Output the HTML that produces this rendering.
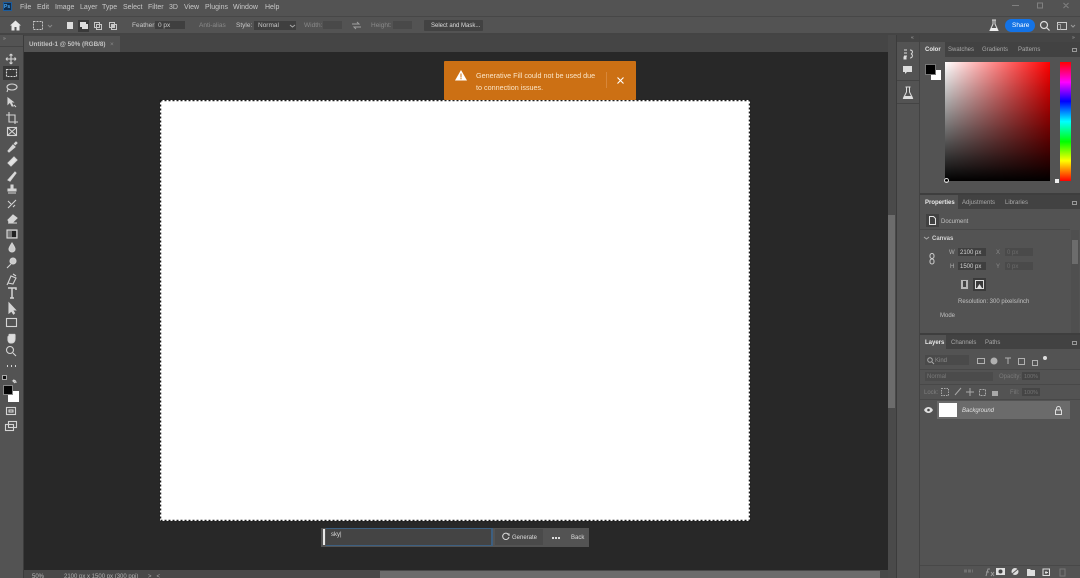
<!DOCTYPE html>
<html><head><meta charset="utf-8"><style>
*{box-sizing:border-box}
html,body{margin:0;padding:0;width:1080px;height:578px;overflow:hidden;background:#535353}
body{font-family:"Liberation Sans",sans-serif;color:#d0d0d0}
#w{position:relative;width:1080px;height:578px;overflow:hidden;background:#535353;filter:blur(.3px)}
.a{position:absolute}
.t{position:absolute;white-space:nowrap;line-height:10px;font-size:6.5px;color:#c8c8c8;margin-top:2px}
.d{color:#8a8a8a}
.f{position:absolute;background:#3f3f3f}
svg{position:absolute;overflow:visible}
</style></head><body><div id="w">
<!-- menu -->
<div class="a" style="left:0;top:0;width:1080px;height:16px;background:#535353"></div>
<div class="a" style="left:3px;top:2px;width:9px;height:9px;background:#0f2c4d;border:1px solid #1c5c9c"></div>
<div class="t" style="left:4px;top:0px;font-size:5px;color:#4aa8f0;font-weight:bold">Ps</div>
<div class="t" style="left:20px;top:1px;font-size:7px">File</div>
<div class="t" style="left:37px;top:1px;font-size:7px">Edit</div>
<div class="t" style="left:55px;top:1px;font-size:7px">Image</div>
<div class="t" style="left:80px;top:1px;font-size:7px">Layer</div>
<div class="t" style="left:102px;top:1px;font-size:7px">Type</div>
<div class="t" style="left:123px;top:1px;font-size:7px">Select</div>
<div class="t" style="left:148px;top:1px;font-size:7px">Filter</div>
<div class="t" style="left:169px;top:1px;font-size:7px">3D</div>
<div class="t" style="left:184px;top:1px;font-size:7px">View</div>
<div class="t" style="left:205px;top:1px;font-size:7px">Plugins</div>
<div class="t" style="left:233px;top:1px;font-size:7px">Window</div>
<div class="t" style="left:265px;top:1px;font-size:7px">Help</div>
<svg style="left:1010px;top:0" width="70" height="12" fill="none" stroke="#808080"><path d="M2 5.500h7M27.500 3h5v5h-5zM53.500 3l5 5M58.500 3l-5 5"/></svg>
<!-- options -->
<div class="a" style="left:0;top:16px;width:1080px;height:1px;background:#474747"></div>
<div class="a" style="left:0;top:33px;width:1080px;height:2px;background:#444"></div>
<svg style="left:10px;top:20px" width="11" height="11"><path d="M5.500 0.500L11 5.500H9.500V10.500H6.500V7H4.500V10.500H1.500V5.500H0Z" fill="#e6e6e6"/></svg>
<svg style="left:33px;top:21px" width="22" height="10" fill="none" stroke="#c4c4c4"><rect x=".5" y=".5" width="9" height="8" stroke-dasharray="2 1"/><path d="M15 4l2 2 2-2" stroke="#888"/></svg>
<div class="a" style="left:67px;top:22px;width:6px;height:7px;background:#ddd"></div>
<div class="a" style="left:78px;top:20px;width:11px;height:12px;background:#3a3a3a"></div>
<div class="a" style="left:80px;top:22px;width:6px;height:5px;background:#ddd"></div>
<div class="a" style="left:82px;top:24px;width:6px;height:5px;background:#ddd"></div>
<svg style="left:94px;top:22px" width="24" height="9" fill="none" stroke="#c8c8c8"><rect x=".5" y=".5" width="5" height="5"/><rect x="2.500" y="2.500" width="5" height="5"/><rect x="15.500" y=".5" width="5" height="5"/><rect x="17.500" y="2.500" width="5" height="5"/><rect x="18" y="3" width="2" height="2" fill="#c8c8c8"/></svg>
<div class="t" style="left:132px;top:19px" >Feather:</div>
<div class="f" style="left:155px;top:21px;width:30px;height:8px"></div>
<div class="t" style="left:158px;top:19px">0 px</div>
<div class="t d" style="left:199px;top:19px">Anti-alias</div>
<div class="t" style="left:236px;top:19px">Style:</div>
<div class="f" style="left:254px;top:21px;width:42px;height:9px"></div>
<div class="t" style="left:258px;top:19px">Normal</div>
<svg style="left:290px;top:24px" width="5" height="4" fill="none" stroke="#aaa"><path d="M0 1l2.500 2 2.500-2"/></svg>
<div class="t d" style="left:304px;top:19px">Width:</div>
<div class="a" style="left:323px;top:21px;width:19px;height:8px;background:#494949"></div>
<svg style="left:352px;top:21px" width="9" height="9" fill="none" stroke="#a0a0a0"><path d="M0 3h7l-2-2M9 6H2l2 2"/></svg>
<div class="t d" style="left:371px;top:19px">Height:</div>
<div class="a" style="left:393px;top:21px;width:19px;height:8px;background:#494949"></div>
<div class="a" style="left:424px;top:20px;width:59px;height:11px;background:#424242;border-radius:1px"></div>
<div class="t" style="left:431px;top:19px;color:#ddd;font-size:6px">Select and Mask...</div>
<svg style="left:989px;top:19px" width="10" height="13"><path d="M3 1h4M4 1v4L1 11.500h8L6 5V1" fill="none" stroke="#ddd"/><path d="M2 9h6l1 3H1z" fill="#eee"/></svg>
<div class="a" style="left:1005px;top:19px;width:30px;height:13px;background:#1473e6;border-radius:7px"></div>
<div class="t" style="left:1012px;top:19px;color:#fff">Share</div>
<svg style="left:1040px;top:21px" width="10" height="10" fill="none" stroke="#ddd" stroke-width="1.200"><circle cx="4" cy="4" r="3.500"/><path d="M6.500 6.500L9.500 9.500"/></svg>
<svg style="left:1057px;top:22px" width="18" height="9" fill="none" stroke="#ccc"><rect x=".5" y=".5" width="9" height="7"/><path d="M.5 2.500h3v5M14 3l2 2 2-2" stroke="#999"/></svg>
<!-- tab row -->
<div class="a" style="left:0;top:35px;width:896px;height:17px;background:#454545"></div>
<div class="a" style="left:24px;top:36px;width:96px;height:16px;background:#535353"></div>
<div class="t" style="left:29px;top:38px;color:#d6d6d6;font-size:6.300px;font-weight:bold;opacity:.85">Untitled-1 @ 50% (RGB/8)</div>
<div class="t d" style="left:110px;top:38px">×</div>
<!-- toolbar -->
<div class="a" style="left:0;top:35px;width:24px;height:543px;background:#535353;border-right:1px solid #3c3c3c"></div>
<div class="a" style="left:0;top:46px;width:23px;height:1px;background:#444"></div>
<div class="t" style="left:3px;top:32px;font-size:5px;color:#aaa">»</div>
<div class="a" style="left:3px;top:66px;width:16px;height:14px;background:#383838"></div>
<svg style="left:0;top:50px" width="24" height="390" fill="none" stroke="#d4d4d4" stroke-width="1.100">
<path d="M11 4v10M6 9h10M11 4l-1.500 1.500M11 4l1.500 1.500M11 14l-1.500-1.500M11 14l1.500-1.500M6 9l1.500-1.500M6 9l1.500 1.500M16 9l-1.500-1.500M16 9l-1.500 1.500"/>
<rect x="6.500" y="19.500" width="10" height="7" stroke-dasharray="2 1"/>
<ellipse cx="12" cy="37" rx="5" ry="3"/><path d="M8 39l-1 3"/>
<path d="M8 48l5 4-2 0 2 4-1 0-2-4-2 2z" fill="#d4d4d4"/><path d="M14 55l2 2"/>
<path d="M9 62v10h9M6 65h9v9"/>
<rect x="7.500" y="77.500" width="9" height="8"/><path d="M7.500 77.500l9 8M16.500 77.500l-9 8"/>
<path d="M8 101l5-6 2 2-6 5zM14 94l2-2 1 1-2 2" fill="#d4d4d4"/>
<path d="M8 113l6-6 3 3-6 6z" fill="#e4e4e4"/>
<path d="M8 130l7-8 1 1-6 8z" fill="#e4e4e4"/>
<path d="M11 135h2l0 4h3v2H8v-2h3zM8 143h8" fill="#d4d4d4"/>
<path d="M8 158l8-8M8 151l3 3M13 157l2-2" />
<path d="M8 170l5-5 4 3-4 4H9z" fill="#d4d4d4"/><path d="M8 173h9"/>
<rect x="7" y="180" width="10" height="8" fill="#777" stroke="#ddd"/><rect x="12" y="181" width="4" height="6" fill="#222" stroke="none"/>
<path d="M12 193c2 3 3 5 3 6a3 3 0 0 1-6 0c0-1 1-3 3-6z" fill="#ccc"/>
<circle cx="13" cy="211" r="3" fill="#ccc"/><path d="M11 214l-4 4"/>
<path d="M8 233l3-7 5 2-3 6zM13 224l3 2M7 235l1-2"/>
<path d="M8 238h8v2M12 238v10M10 248h4" stroke-width="1.500"/>
<path d="M9 253v10l2.500-2 2 3 1-1-2-3h3z" fill="#d4d4d4"/>
<rect x="6.500" y="268.500" width="10" height="8"/>
<path d="M8 290v-3c0-1 1-1 1 0v-2c0-1 2-1 2 0 0-1 2-1 2 0 0-1 2-1 2 0v4c0 3-2 4-3 4h-2c-1 0-2-2-2-3z" fill="#ddd"/>
<circle cx="10" cy="300" r="3.500"/><path d="M13 303l3 3"/>
<path d="M7 316h1M11 316h1M15 316h1" stroke-width="2"/>
<path d="M13 330c2 0 3 1 3 3M15 331l-2 0 2 2"/>
<rect x="6.500" y="357.500" width="9" height="7"/><rect x="9" y="360" width="4" height="2"/>
<rect x="8.500" y="371.500" width="8" height="6"/><rect x="5.500" y="374.500" width="8" height="6"/>
</svg>
<div class="a" style="left:2px;top:375px;width:5px;height:5px;background:#111;border:1px solid #aaa"></div>
<div class="a" style="left:8px;top:391px;width:11px;height:11px;background:#fff"></div>
<div class="a" style="left:3px;top:385px;width:10px;height:10px;background:#050505;border:1px solid #888"></div>
<!-- canvas area -->
<div class="a" style="left:24px;top:52px;width:864px;height:518px;background:#282828"></div>
<div class="a" style="left:160px;top:100px;width:590px;height:421px;background:#fff"></div>
<svg style="left:160px;top:100px" width="590" height="421" fill="none"><rect x="0.500" y="0.500" width="589" height="420" stroke="#1a1a1a" stroke-dasharray="2 2" stroke-width="1.500"/></svg>
<!-- toast -->
<div class="a" style="left:444px;top:61px;width:192px;height:39px;background:#cc7014;border-radius:1px"></div>
<svg style="left:455px;top:70px" width="12" height="11"><path d="M6 0L12 10.500H0Z" fill="#fff"/><path d="M5.500 3.500h1v4h-1zM5.500 8h1v1.200h-1z" fill="#cc7014"/></svg>
<div class="t" style="left:476px;top:69px;font-size:7.200px;color:#fbe6c8">Generative Fill could not be used due</div>
<div class="t" style="left:476px;top:81px;font-size:7.200px;color:#fbe6c8">to connection issues.</div>
<div class="a" style="left:606px;top:72px;width:1px;height:16px;background:#d8873a"></div>
<svg style="left:617px;top:77px" width="7" height="7" stroke="#fff" stroke-width="1.100"><path d="M.5.500l6 6M6.500.500l-6 6"/></svg>
<!-- prompt bar -->
<div class="a" style="left:321px;top:528px;width:268px;height:19px;background:#535353"></div>
<div class="a" style="left:323px;top:529px;width:2px;height:16px;background:#e8e8e8"></div>
<div class="a" style="left:326px;top:528px;width:167px;height:18px;background:#444;border:1px solid #3d5f80;border-width:1px 2px 1px 0"></div>
<div class="t" style="left:331px;top:528px;font-size:6px;color:#ddd">sky|</div>
<div class="a" style="left:495px;top:529px;width:48px;height:16px;background:#4a4a4a"></div>
<svg style="left:502px;top:533px" width="8" height="8" fill="none" stroke="#ddd"><path d="M6.500 1.500A3.200 3.200 0 1 0 7 4M5 1h2v2"/></svg>
<div class="t" style="left:512px;top:531px;font-size:6px;color:#ddd">Generate</div>
<div class="a" style="left:552px;top:537px;width:2px;height:1.500px;background:#ddd"></div>
<div class="a" style="left:555px;top:537px;width:2px;height:1.500px;background:#ddd"></div>
<div class="a" style="left:558px;top:537px;width:2px;height:1.500px;background:#ddd"></div>
<div class="t" style="left:571px;top:531px;font-size:6px;color:#ddd">Back</div>
<!-- status -->
<div class="a" style="left:24px;top:570px;width:864px;height:8px;background:#484848"></div>
<div class="t" style="left:32px;top:570px;color:#b8b8b8;font-size:6px">50%</div>
<div class="t" style="left:64px;top:570px;color:#b0b0b0;font-size:6px">2100 px x 1500 px (300 ppi)</div>
<div class="t" style="left:148px;top:570px;font-size:6px;color:#aaa">&gt;&nbsp;&nbsp;&nbsp;&lt;</div>
<div class="a" style="left:380px;top:571px;width:500px;height:7px;background:#6b6b6b"></div>
<!-- v scrollbar -->
<div class="a" style="left:888px;top:35px;width:9px;height:543px;background:#4a4a4a"></div>
<div class="a" style="left:888px;top:215px;width:7px;height:193px;background:#6c6c6c"></div>
<div class="a" style="left:896px;top:35px;width:1px;height:543px;background:#3c3c3c"></div>
<!-- dock -->
<div class="a" style="left:897px;top:35px;width:183px;height:543px;background:#535353"></div>
<div class="a" style="left:897px;top:35px;width:183px;height:7px;background:#454545"></div>
<div class="t" style="left:911px;top:31px;font-size:5px;color:#aaa">«</div>
<div class="t" style="left:1072px;top:31px;font-size:5px;color:#aaa">»</div>
<div class="a" style="left:919px;top:35px;width:1px;height:543px;background:#434343"></div>
<div class="a" style="left:897px;top:80px;width:22px;height:1px;background:#444"></div>
<div class="a" style="left:897px;top:103px;width:22px;height:1px;background:#444"></div>
<svg style="left:903px;top:49px" width="12" height="11" fill="none" stroke="#ddd"><path d="M1 1h3M1 4h3M1 7h3M7 1c3 0 3 3 1 4 2 0 2 4-1 4"/><rect x="1" y="8" width="2" height="2" fill="#ddd"/></svg>
<svg style="left:903px;top:66px" width="10" height="9"><path d="M0 0h9v6H4L2 8V6H0z" fill="#ddd"/></svg>
<svg style="left:902px;top:86px" width="12" height="15"><path d="M3.500 1h5M4.500 1v5L1.500 12h9L7.500 6V1" fill="none" stroke="#ddd"/><path d="M2 10h8l1 3H1z" fill="#ddd"/></svg>
<!-- color panel -->
<div class="a" style="left:920px;top:42px;width:160px;height:15px;background:#424242"></div>
<div class="a" style="left:920px;top:42px;width:25px;height:15px;background:#535353"></div>
<div class="t" style="left:925px;top:43px;color:#e8e8e8;font-weight:bold;font-size:6px">Color</div>
<div class="t" style="left:948px;top:43px;color:#a8a8a8;font-size:6px">Swatches</div>
<div class="t" style="left:982px;top:43px;color:#a8a8a8;font-size:6px">Gradients</div>
<div class="t" style="left:1018px;top:43px;color:#a8a8a8;font-size:6px">Patterns</div>
<div class="a" style="left:1072px;top:48px;width:5px;height:4px;border:1px solid #999"></div>
<div class="a" style="left:931px;top:70px;width:10px;height:10px;background:#fff"></div>
<div class="a" style="left:925px;top:64px;width:11px;height:11px;background:#000;border:1px solid #777"></div>
<div class="a" style="left:945px;top:62px;width:105px;height:119px;background:linear-gradient(to top,#000,rgba(0,0,0,0)),linear-gradient(to right,#fff,#f00)"></div>
<div class="a" style="left:1060px;top:62px;width:11px;height:119px;background:linear-gradient(to bottom,#f00 0%,#f0f 17%,#00f 33%,#0ff 50%,#0f0 67%,#ff0 83%,#f00 100%)"></div>
<div class="a" style="left:1055px;top:179px;width:4px;height:4px;background:#eee"></div>
<div class="a" style="left:944px;top:178px;width:5px;height:5px;border:1px solid #ddd;border-radius:50%"></div>
<!-- properties -->
<div class="a" style="left:920px;top:193px;width:160px;height:2px;background:#3e3e3e"></div>
<div class="a" style="left:920px;top:195px;width:160px;height:14px;background:#424242"></div>
<div class="a" style="left:920px;top:195px;width:38px;height:14px;background:#535353"></div>
<div class="t" style="left:925px;top:196px;color:#e8e8e8;font-weight:bold;font-size:6px">Properties</div>
<div class="t" style="left:962px;top:196px;color:#a8a8a8;font-size:6px">Adjustments</div>
<div class="t" style="left:1005px;top:196px;color:#a8a8a8;font-size:6px">Libraries</div>
<div class="a" style="left:1072px;top:201px;width:5px;height:4px;border:1px solid #999"></div>
<div class="a" style="left:926px;top:214px;width:13px;height:13px;background:#424242"></div>
<svg style="left:929px;top:216px" width="7" height="9" fill="none" stroke="#e4e4e4"><path d="M.5.500h4l2 2v6h-6z"/></svg>
<div class="t" style="left:941px;top:215px;font-size:6px;color:#c0c0c0">Document</div>
<div class="a" style="left:920px;top:229px;width:150px;height:1px;background:#484848"></div>
<svg style="left:924px;top:236px" width="5" height="4" fill="none" stroke="#aaa"><path d="M0 1l2.500 2 2.500-2"/></svg>
<div class="t" style="left:932px;top:232px;font-size:6px;color:#d4d4d4;font-weight:bold">Canvas</div>
<svg style="left:929px;top:253px" width="7" height="12" fill="none" stroke="#ccc"><rect x="1" y=".5" width="4" height="5" rx="2"/><rect x="1" y="6" width="4" height="5" rx="2"/></svg>
<div class="t" style="left:949px;top:246px;font-size:6px;color:#b0b0b0">W</div>
<div class="f" style="left:958px;top:248px;width:28px;height:8px"></div>
<div class="t" style="left:960px;top:246px;font-size:6px;color:#d4d4d4">2100 px</div>
<div class="t d" style="left:996px;top:246px;font-size:6px">X</div>
<div class="a" style="left:1005px;top:248px;width:28px;height:8px;background:#4a4a4a"></div>
<div class="t" style="left:1007px;top:246px;font-size:6px;color:#6c6c6c">0 px</div>
<div class="t" style="left:950px;top:260px;font-size:6px;color:#b0b0b0">H</div>
<div class="f" style="left:958px;top:262px;width:28px;height:8px"></div>
<div class="t" style="left:960px;top:260px;font-size:6px;color:#d4d4d4">1500 px</div>
<div class="t d" style="left:996px;top:260px;font-size:6px">Y</div>
<div class="a" style="left:1005px;top:262px;width:28px;height:8px;background:#4a4a4a"></div>
<div class="t" style="left:1007px;top:260px;font-size:6px;color:#6c6c6c">0 px</div>
<div class="a" style="left:960px;top:279px;width:9px;height:11px;background:#b8b8b8;border:1px solid #555"></div>
<div class="a" style="left:963px;top:281px;width:3px;height:6px;background:#444"></div>
<div class="a" style="left:973px;top:278px;width:13px;height:13px;background:#3a3a3a"></div>
<svg style="left:975px;top:280px" width="9" height="9"><rect x=".5" y=".5" width="8" height="8" fill="none" stroke="#ddd"/><path d="M2 8l2.500-4 2.500 4z" fill="#ddd"/></svg>
<div class="t" style="left:958px;top:295px;font-size:6px;color:#c0c0c0">Resolution: 300 pixels/inch</div>
<div class="t" style="left:940px;top:309px;font-size:6px;color:#c0c0c0">Mode</div>
<div class="a" style="left:1071px;top:230px;width:8px;height:103px;background:#4f4f4f"></div>
<div class="a" style="left:1072px;top:240px;width:6px;height:24px;background:#6c6c6c"></div>
<!-- layers -->
<div class="a" style="left:920px;top:333px;width:160px;height:2px;background:#3e3e3e"></div>
<div class="a" style="left:920px;top:335px;width:160px;height:14px;background:#424242"></div>
<div class="a" style="left:920px;top:335px;width:26px;height:14px;background:#535353"></div>
<div class="t" style="left:925px;top:336px;color:#e8e8e8;font-weight:bold;font-size:6px">Layers</div>
<div class="t" style="left:951px;top:336px;color:#a8a8a8;font-size:6px">Channels</div>
<div class="t" style="left:985px;top:336px;color:#a8a8a8;font-size:6px">Paths</div>
<div class="a" style="left:1072px;top:341px;width:5px;height:4px;border:1px solid #999"></div>
<div class="a" style="left:925px;top:355px;width:44px;height:10px;background:#4a4a4a"></div>
<div class="t" style="left:935px;top:354px;font-size:6px;color:#8c8c8c">Kind</div>
<svg style="left:927px;top:357px" width="7" height="7" fill="none" stroke="#aaa"><circle cx="3" cy="3" r="2.300"/><path d="M5 5l2 2"/></svg>
<svg style="left:977px;top:355px" width="74" height="12" fill="none" stroke="#b0b0b0"><rect x=".5" y="3.500" width="7" height="5"/><circle cx="17" cy="6" r="3" fill="#b0b0b0"/><path d="M28 3h6M31 3v6"/><rect x="41.500" y="3.500" width="6" height="6"/><rect x="55.500" y="5.500" width="5" height="5"/><circle cx="68" cy="3" r="2" fill="#ddd" stroke="none"/></svg>
<div class="a" style="left:920px;top:369px;width:160px;height:1px;background:#484848"></div>
<div class="a" style="left:925px;top:372px;width:68px;height:9px;background:#4b4b4b"></div>
<div class="t d" style="left:927px;top:370px;font-size:6px;color:#7a7a7a">Normal</div>
<div class="t d" style="left:999px;top:370px;font-size:6px;color:#7a7a7a">Opacity:</div>
<div class="a" style="left:1022px;top:372px;width:18px;height:8px;background:#454545"></div>
<div class="t" style="left:1024px;top:370px;font-size:5.500px;color:#747474">100%</div>
<div class="a" style="left:920px;top:384px;width:160px;height:1px;background:#484848"></div>
<div class="t d" style="left:924px;top:386px;font-size:6px;color:#7f7f7f">Lock:</div>
<svg style="left:941px;top:387px" width="56" height="10" fill="none" stroke="#a8a8a8"><rect x=".5" y="1.500" width="7" height="7" stroke-dasharray="1.500 1"/><path d="M14 8l6-7M29 1v8M25 5h8"/><rect x="38.500" y="2.500" width="6" height="6" stroke-dasharray="2 1"/><rect x="51.500" y="4.500" width="5" height="4" fill="#a8a8a8"/></svg>
<div class="t d" style="left:1010px;top:386px;font-size:6px;color:#7a7a7a">Fill:</div>
<div class="a" style="left:1022px;top:388px;width:18px;height:8px;background:#454545"></div>
<div class="t" style="left:1024px;top:386px;font-size:5.500px;color:#747474">100%</div>
<div class="a" style="left:920px;top:399px;width:160px;height:1px;background:#484848"></div>
<div class="a" style="left:937px;top:401px;width:133px;height:18px;background:#6b6b6b"></div>
<svg style="left:924px;top:407px" width="9" height="6"><path d="M0 3c2-4 7-4 9 0-2 4-7 4-9 0z" fill="#e0e0e0"/><circle cx="4.500" cy="3" r="1.300" fill="#444"/></svg>
<div class="a" style="left:939px;top:403px;width:18px;height:14px;background:#fff"></div>
<div class="t" style="left:962px;top:404px;font-size:6px;font-style:italic;color:#e0e0e0">Background</div>
<svg style="left:1055px;top:406px" width="7" height="9" fill="none" stroke="#ddd"><path d="M1.500 4V2.500a2 2 0 0 1 4 0V4"/><rect x=".5" y="4" width="6" height="4.500"/></svg>
<!-- layers footer -->
<div class="a" style="left:920px;top:565px;width:160px;height:1px;background:#484848"></div>
<svg style="left:962px;top:566px" width="104" height="12" fill="none" stroke="#9a9a9a">
<path d="M2 5h9" stroke="#707070" stroke-width="3" stroke-dasharray="3 1"/>
<path d="M24 10l2-7h2M24 6h3M29 6l3 4M32 6l-3 4"/>
<rect x="34" y="2" width="9" height="7" fill="#e0e0e0" stroke="none"/><circle cx="38.500" cy="5.500" r="2" fill="#444" stroke="none"/>
<circle cx="53" cy="5.500" r="3.500" fill="#ddd" stroke="none"/><path d="M50 8l6-5" stroke="#555"/>
<path d="M65 3h3l1 1h4v6h-8z" fill="#ddd" stroke="none"/>
<rect x="81" y="3" width="6.500" height="6.500" stroke="#ddd"/><path d="M84 5v3M83 6.500h3" stroke="#ddd"/>
<rect x="98" y="3" width="5" height="7" stroke="#777"/>
</svg>
</div></body></html>
